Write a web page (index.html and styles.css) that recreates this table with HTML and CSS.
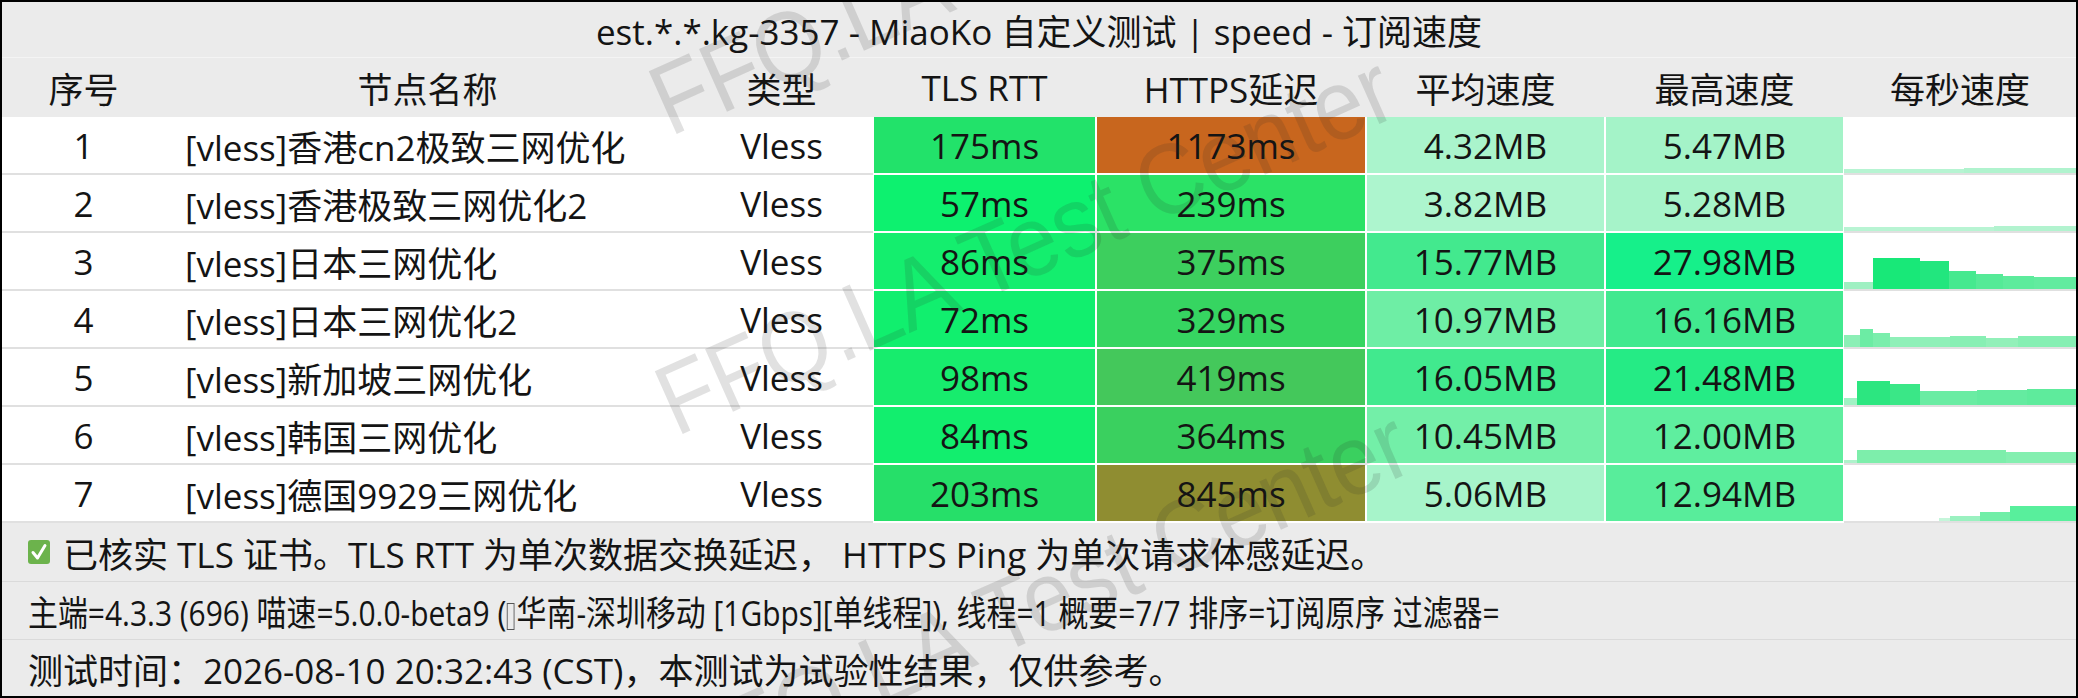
FILE: index.html
```html
<!DOCTYPE html>
<html lang="zh-CN">
<head>
<meta charset="utf-8">
<title>MiaoKo speed</title>
<link rel="stylesheet" href="styles.css">
</head>
<body>
<div class="frame">
  <div class="title">est.*.*.kg-3357 - MiaoKo 自定义测试 | speed - 订阅速度</div>
  <div class="grid">
    <div class="h">序号</div>
    <div class="h">节点名称</div>
    <div class="h">类型</div>
    <div class="h">TLS RTT</div>
    <div class="h">HTTPS延迟</div>
    <div class="h">平均速度</div>
    <div class="h">最高速度</div>
    <div class="h">每秒速度</div>

    <div class="c">1</div><div class="c name">[vless]香港cn2极致三网优化</div><div class="c">Vless</div>
    <div class="c k t1">175ms</div><div class="c k h1">1173ms</div><div class="c k a1">4.32MB</div><div class="c k m1">5.47MB</div>
    <div class="c chart"><svg viewBox="0 0 232 56" preserveAspectRatio="none"><rect x="0" y="52" width="120" height="4" fill="#b6f4d2"/><rect x="120" y="51" width="112" height="5" fill="#b0f3ce"/></svg></div>

    <div class="c">2</div><div class="c name">[vless]香港极致三网优化2</div><div class="c">Vless</div>
    <div class="c k t2">57ms</div><div class="c k h2">239ms</div><div class="c k a2">3.82MB</div><div class="c k m2">5.28MB</div>
    <div class="c chart"><svg viewBox="0 0 232 56" preserveAspectRatio="none"><rect x="0" y="52" width="150" height="4" fill="#b8f4d3"/><rect x="150" y="51" width="82" height="5" fill="#b2f3cf"/></svg></div>

    <div class="c">3</div><div class="c name">[vless]日本三网优化</div><div class="c">Vless</div>
    <div class="c k t3">86ms</div><div class="c k h3">375ms</div><div class="c k a3">15.77MB</div><div class="c k m3">27.98MB</div>
    <div class="c chart"><svg viewBox="0 0 232 56" preserveAspectRatio="none"><rect x="0" y="49" width="29" height="7" fill="#9ff0c2"/><rect x="29" y="25" width="47" height="31" fill="#18e878"/><rect x="76" y="28" width="29" height="28" fill="#22e67e"/><rect x="105" y="38" width="27" height="18" fill="#46e98f"/><rect x="132" y="41" width="27" height="15" fill="#55ea97"/><rect x="159" y="43" width="31" height="13" fill="#5deb9c"/><rect x="190" y="44" width="42" height="12" fill="#62eb9f"/></svg></div>

    <div class="c">4</div><div class="c name">[vless]日本三网优化2</div><div class="c">Vless</div>
    <div class="c k t4">72ms</div><div class="c k h4">329ms</div><div class="c k a4">10.97MB</div><div class="c k m4">16.16MB</div>
    <div class="c chart"><svg viewBox="0 0 232 56" preserveAspectRatio="none"><rect x="0" y="44" width="16" height="12" fill="#8cefb6"/><rect x="16" y="38" width="13" height="18" fill="#6ceca4"/><rect x="29" y="42" width="17" height="14" fill="#7aeeac"/><rect x="46" y="46" width="60" height="10" fill="#8ff0b8"/><rect x="106" y="45" width="36" height="11" fill="#88efb4"/><rect x="142" y="47" width="32" height="9" fill="#92f0b9"/><rect x="174" y="45" width="58" height="11" fill="#86efb3"/></svg></div>

    <div class="c">5</div><div class="c name">[vless]新加坡三网优化</div><div class="c">Vless</div>
    <div class="c k t5">98ms</div><div class="c k h5">419ms</div><div class="c k a5">16.05MB</div><div class="c k m5">21.48MB</div>
    <div class="c chart"><svg viewBox="0 0 232 56" preserveAspectRatio="none"><rect x="0" y="49" width="13" height="7" fill="#a0f2c4"/><rect x="13" y="32" width="33" height="24" fill="#2ce680"/><rect x="46" y="35" width="30" height="21" fill="#3ae787"/><rect x="76" y="42" width="57" height="14" fill="#6aeca3"/><rect x="133" y="41" width="50" height="15" fill="#64eba0"/><rect x="183" y="40" width="49" height="16" fill="#5eeb9c"/></svg></div>

    <div class="c">6</div><div class="c name">[vless]韩国三网优化</div><div class="c">Vless</div>
    <div class="c k t6">84ms</div><div class="c k h6">364ms</div><div class="c k a6">10.45MB</div><div class="c k m6">12.00MB</div>
    <div class="c chart"><svg viewBox="0 0 232 56" preserveAspectRatio="none"><rect x="0" y="53" width="13" height="3" fill="#aef2cb"/><rect x="13" y="43" width="149" height="13" fill="#7deeab"/><rect x="162" y="45" width="70" height="11" fill="#84efb0"/></svg></div>

    <div class="c">7</div><div class="c name">[vless]德国9929三网优化</div><div class="c">Vless</div>
    <div class="c k t7">203ms</div><div class="c k h7">845ms</div><div class="c k a7">5.06MB</div><div class="c k m7">12.94MB</div>
    <div class="c chart"><svg viewBox="0 0 232 56" preserveAspectRatio="none"><rect x="95" y="53" width="11" height="3" fill="#c5f6da"/><rect x="106" y="51" width="30" height="5" fill="#9af1c0"/><rect x="136" y="47" width="30" height="9" fill="#70eea7"/><rect x="166" y="41" width="66" height="15" fill="#58ef9c"/></svg></div>
  </div>
  <div class="footer">
    <div class="fline"><svg class="check" viewBox="0 0 22 24"><rect x="0" y="0" width="22" height="24" rx="3" fill="#6cb34c"/><path d="M5 12.5 L9.5 18 L17 5.5" fill="none" stroke="#fff" stroke-width="3" stroke-linecap="round" stroke-linejoin="round"/></svg><span>已核实 TLS 证书。TLS RTT 为单次数据交换延迟， HTTPS Ping 为单次请求体感延迟。</span></div>
    <div class="fline"><span class="squeeze">主端=4.3.3 (696) 喵速=5.0.0-beta9 (<span class="tofu"></span>华南-深圳移动 [1Gbps][单线程]), 线程=1 概要=7/7 排序=订阅原序 过滤器=</span></div>
    <div class="fline last">测试时间：2026-08-10 20:32:43 (CST)，本测试为试验性结果，仅供参考。</div>
  </div>
  <div class="wm wm-top">FFQ.LA Test Center</div>
  <div class="wm wm-mid">FFQ.LA Test Center</div>
  <div class="wm wm-bot">FFQ.LA Test Center</div>
</div>
</body>
</html>
```
FILE: styles.css
```css
* { box-sizing: border-box; margin: 0; padding: 0; }
body {
  margin: 0;
  background: #ffffff;
  font-family: "Open Sans", "Noto Sans CJK SC", sans-serif;
  color: #141414;
}
.frame {
  position: relative;
  width: 2078px;
  height: 698px;
  border: 2px solid #000;
  background: #ebebeb;
  overflow: hidden;
  font-size: 35px;
}
.title {
  height: 56px;
  display: flex;
  align-items: center;
  justify-content: center;
  border-bottom: 1px solid #f4f4f4;
}
.grid {
  display: grid;
  grid-template-columns: 163px 525px 183px 223px 270px 239px 239px 232px;
  grid-template-rows: 59px repeat(7, 58px);
}
.h {
  display: flex;
  align-items: center;
  justify-content: center;
  background: #ebebeb;
}
.c {
  display: flex;
  align-items: center;
  justify-content: center;
  background: #ffffff;
  border-bottom: 2px solid #e0e0e0;
}
.c.name { justify-content: flex-start; padding-left: 20px; }
.c.k {
  border-left: 1px solid #ffffff;
  border-right: 1px solid #ffffff;
  border-bottom: 2px solid #ffffff;
}
.c.chart { align-items: stretch; }
.c.chart svg { width: 100%; height: 100%; display: block; }

.t1 { background: #22e26a; } .h1 { background: #c8661e; } .a1 { background: #aaf4cc; } .m1 { background: #a4f3c8; }
.t2 { background: #0df16f; } .h2 { background: #2be266; } .a2 { background: #adf5ce; } .m2 { background: #a6f3c9; }
.t3 { background: #14ee6e; } .h3 { background: #3dcf5e; } .a3 { background: #43e98e; } .m3 { background: #16f08a; }
.t4 { background: #11ef6e; } .h4 { background: #36d561; } .a4 { background: #6eeea5; } .m4 { background: #41e98f; }
.t5 { background: #17ec6d; } .h5 { background: #44c85b; } .a5 { background: #41e98e; } .m5 { background: #25eb85; }
.t6 { background: #12ee6e; } .h6 { background: #3ad05f; } .a6 { background: #73efa8; } .m6 { background: #5fee9f; }
.t7 { background: #26df69; } .h7 { background: #8f8d31; } .a7 { background: #a7f4ca; } .m7 { background: #58ed9b; }

.footer { display: flex; flex-direction: column; }
.fline {
  height: 58px;
  display: flex;
  align-items: center;
  padding-left: 26px;
  white-space: nowrap;
}
.fline + .fline { border-top: 1px solid #dadada; }
.fline.last { height: 57px; }
.squeeze {
  display: inline-block;
  transform-origin: 0 50%;
  transform: scaleX(0.855);
}
.check { width: 22px; height: 24px; margin-right: 13px; flex: none; }
.tofu {
  display: inline-block;
  width: 9px;
  height: 27px;
  border: 1px solid #555;
  margin: 0 2px 0 1px;
  vertical-align: -4px;
}
.wm {
  position: absolute;
  left: 0;
  top: 0;
  font-family: "Liberation Sans", sans-serif;
  font-size: 100px;
  line-height: 1;
  white-space: nowrap;
  color: rgba(40, 40, 40, 0.14);
  pointer-events: none;
  transform-origin: 0 85px;
  transform: rotate(-24deg) scaleX(0.9);
}
.wm-top { left: 668px; top: 50px; }
.wm-mid { left: 674px; top: 350px; }
.wm-bot { left: 690px; top: 705px; }
```
